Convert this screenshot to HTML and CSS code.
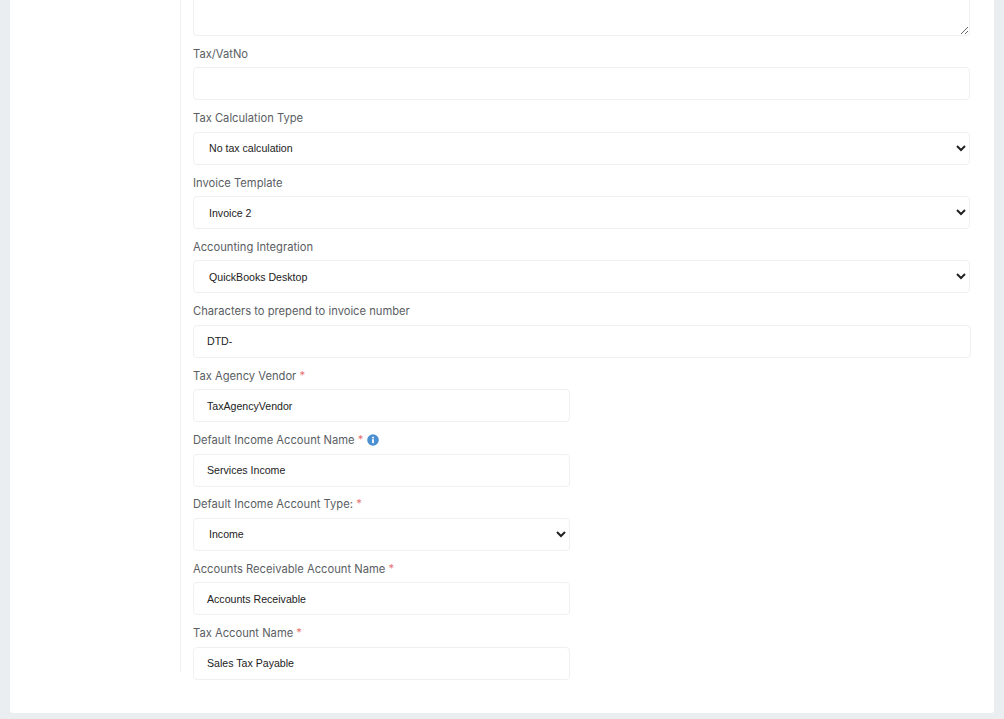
FILE: index.html
```html
<!DOCTYPE html>
<html lang="en">
<head>
  <meta charset="UTF-8">
  <meta name="viewport" content="width=device-width, initial-scale=1.0">
  <title>Settings</title>
  <link rel="stylesheet" href="styles.css">
</head>
<body>
  <div class="card">
    <form class="form-col">
      <textarea class="field top-area"></textarea>

      <label class="label first">Tax/VatNo</label>
      <input class="field" type="text">

      <label class="label">Tax Calculation Type</label>
      <select class="field"><option>No tax calculation</option></select>

      <label class="label">Invoice Template</label>
      <select class="field"><option>Invoice 2</option></select>

      <label class="label">Accounting Integration</label>
      <select class="field"><option>QuickBooks Desktop</option></select>

      <label class="label">Characters to prepend to invoice number</label>
      <input class="field wide" type="text" value="DTD-">

      <label class="label">Tax Agency Vendor <span class="req">*</span></label>
      <input class="field half" type="text" value="TaxAgencyVendor">

      <label class="label">Default Income Account Name <span class="req">*</span>
        <svg class="info" viewBox="0 0 12 12" width="12" height="12">
          <circle cx="6" cy="6" r="5.8" fill="#4a90d2"/>
          <rect x="5.1" y="5.2" width="1.8" height="3.9" fill="#fff"/>
          <rect x="5.1" y="2.8" width="1.8" height="1.6" fill="#fff"/>
        </svg>
      </label>
      <input class="field half" type="text" value="Services Income">

      <label class="label">Default Income Account Type: <span class="req">*</span></label>
      <select class="field half"><option>Income</option></select>

      <label class="label">Accounts Receivable Account Name <span class="req">*</span></label>
      <input class="field half" type="text" value="Accounts Receivable">

      <label class="label">Tax Account Name <span class="req">*</span></label>
      <input class="field half" type="text" value="Sales Tax Payable">
    </form>
  </div>
</body>
</html>
```

FILE: styles.css
```css
html, body {
  margin: 0;
  height: 719px;
  overflow: hidden;
}
body {
  background-color: #ebeef1;
  font-family: 'Liberation Sans', Arial, sans-serif;
}
.card {
  margin-left: 10px;
  width: 984px;
  height: 713px;
  background-color: #fff;
  border-radius: 0 0 3px 3px;
}
.form-col {
  box-sizing: border-box;
  margin-left: 170px;
  height: 672px;
  width: 792px;
  padding-left: 12px;
  border-left: 1px solid #f0f1f3;
}
.label {
  display: block;
  height: 16px;
  margin: 9.87px 0 5.5px;
  font-family: 'Inter', sans-serif;
  font-size: 11.2px;
  line-height: 16px;
  color: #5a5e63;
}
.label.first {
  margin-top: 9.9px;
}
.req {
  color: #e57373;
}
.info {
  vertical-align: -2px;
}
.field {
  display: block;
  box-sizing: border-box;
  width: 777px;
  height: 33px;
  padding: 0 13px;
  background-color: #fff;
  border: 1px solid #eef0f2;
  border-radius: 4px;
  font-family: 'Liberation Sans', Arial, sans-serif;
  font-size: 10.6px;
  color: #222;
  outline: none;
}
select.field {
  padding-left: 11px;
}
.top-area {
  height: 36px;
  border-top: 0;
  border-radius: 0 0 4px 4px;
}
.wide {
  width: 778px;
}
.half {
  width: 377px;
}
```
